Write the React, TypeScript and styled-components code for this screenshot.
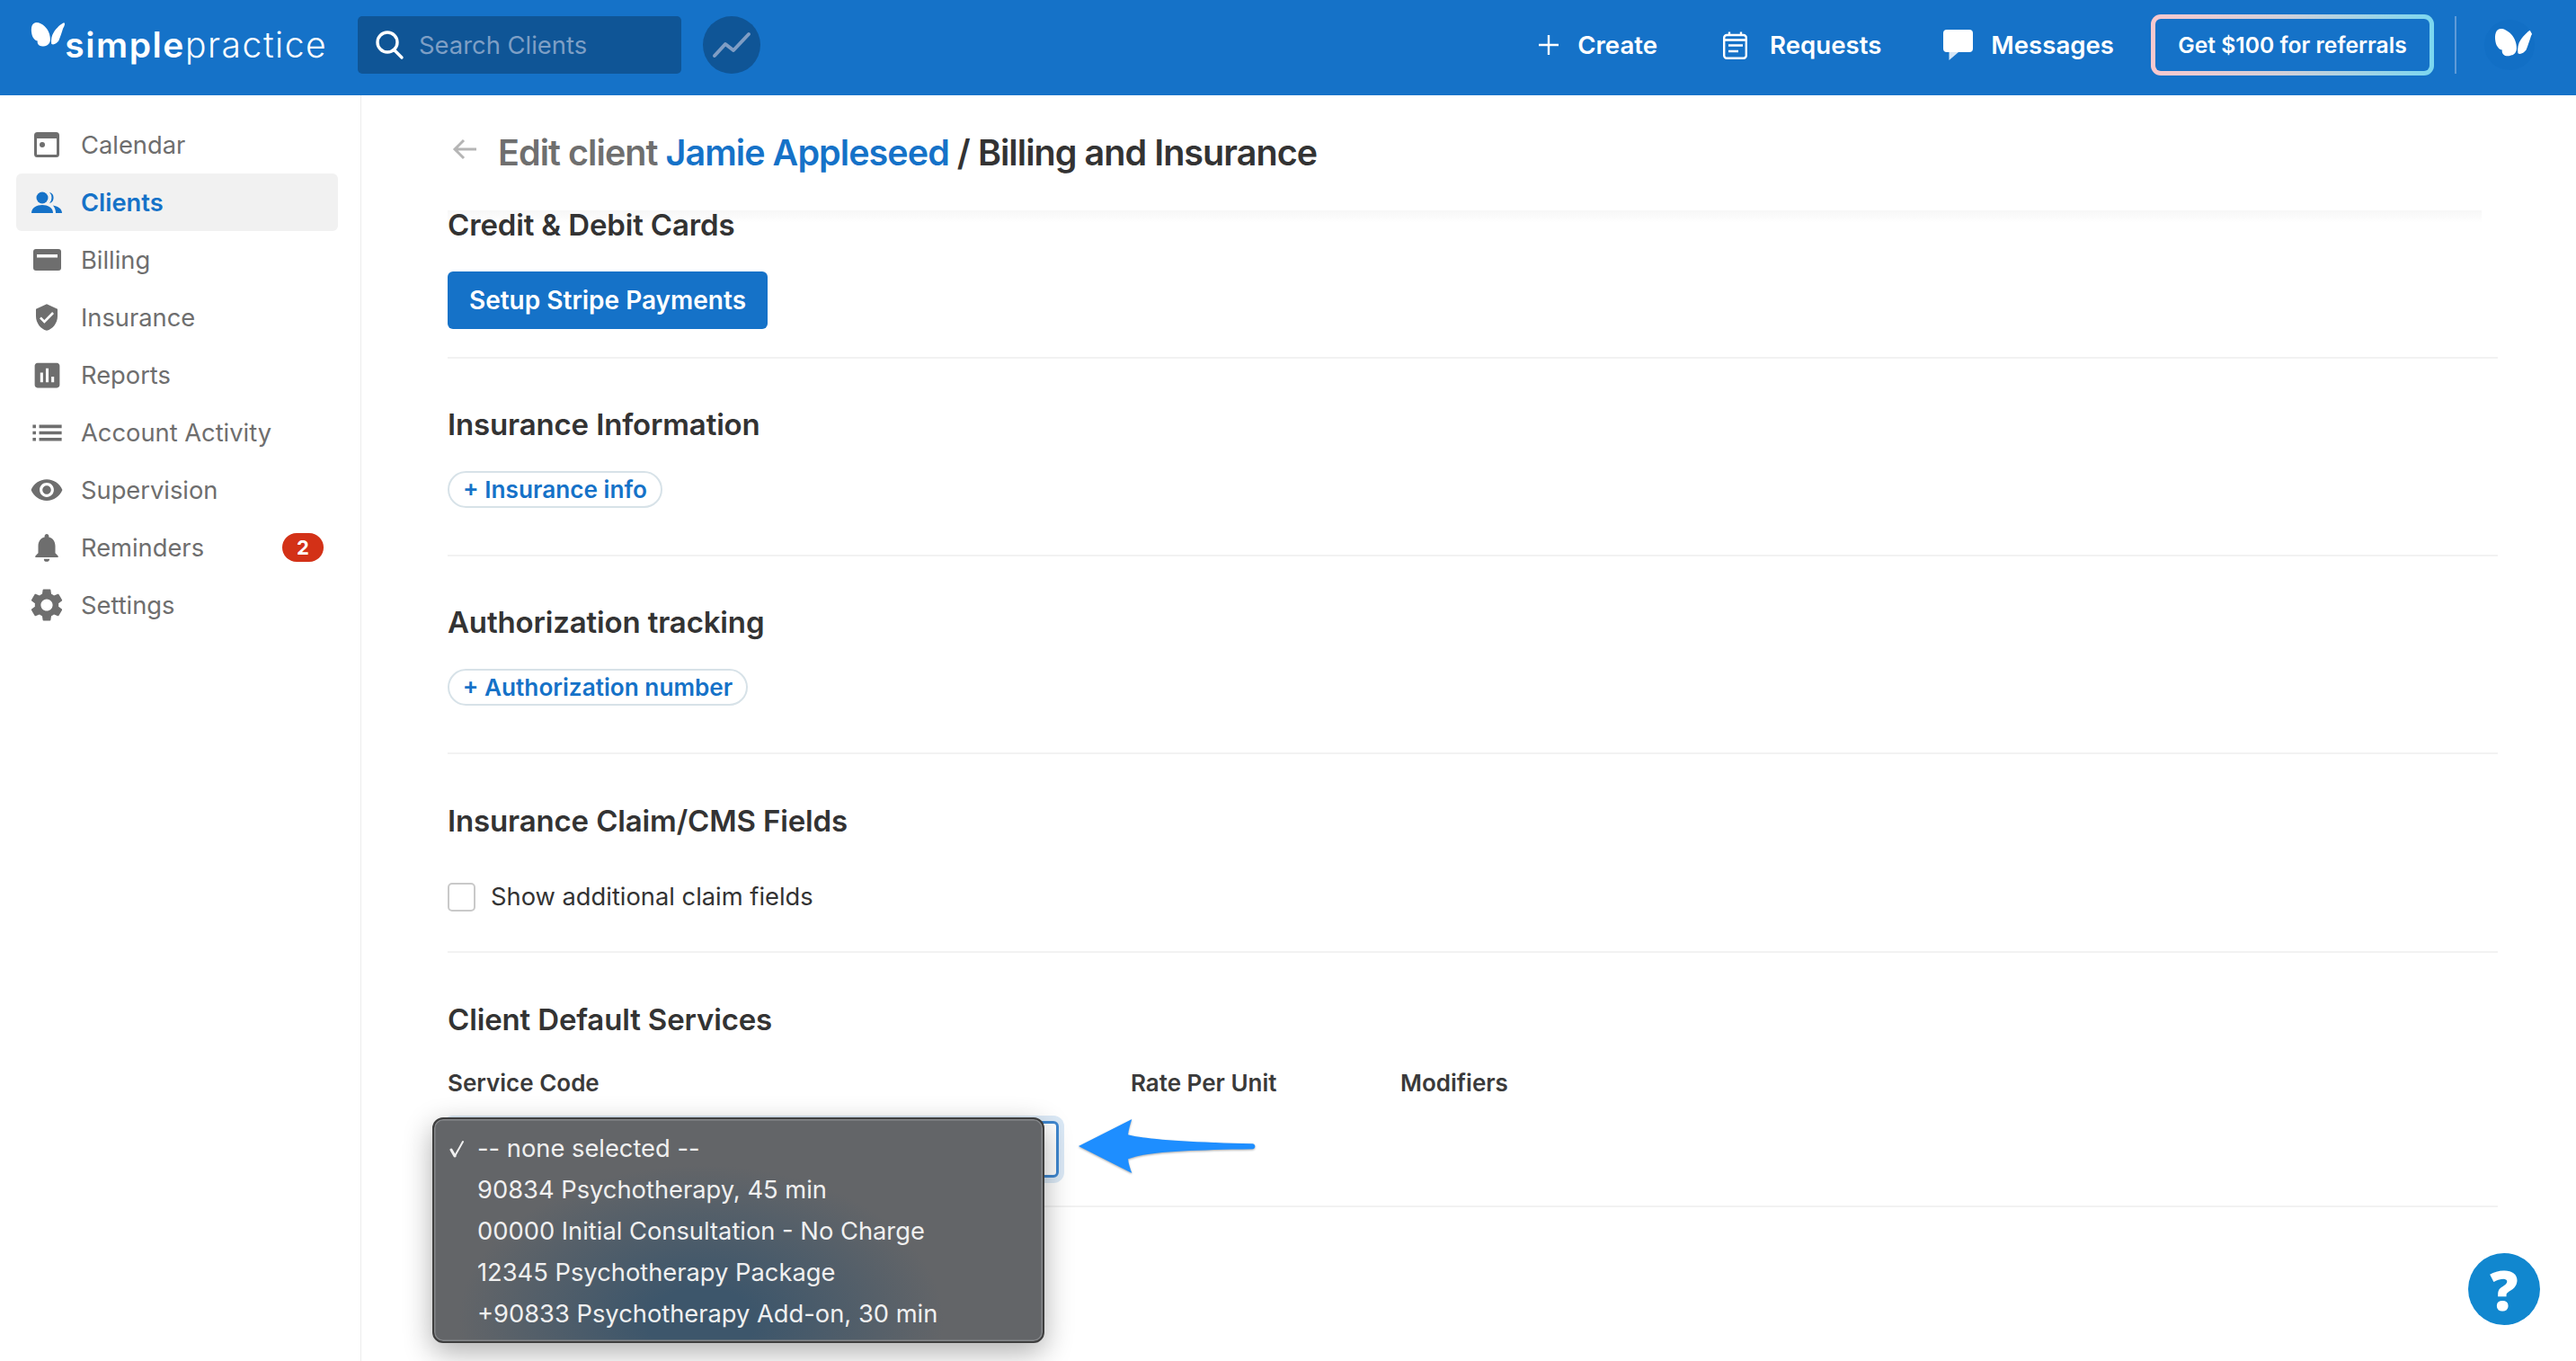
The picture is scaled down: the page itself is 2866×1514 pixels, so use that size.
import React from 'react';
import styled, { createGlobalStyle } from 'styled-components';
import {
  MdVerifiedUser,
  MdAssessment,
  MdList,
  MdVisibility,
  MdNotifications,
  MdSettings
} from 'react-icons/md';

const GlobalStyle = createGlobalStyle`
  html, body {
    margin: 0;
    padding: 0;
    background: #fff;
    font-family: Inter, "Liberation Sans", sans-serif;
  }
  * { box-sizing: border-box; }
`;

const Page = styled.div`
  position: relative;
  width: 2866px;
  height: 1514px;
  overflow: hidden;
  display: flex;
  flex-direction: column;
`;

const TopBar = styled.header`
  flex: 0 0 106px;
  display: flex;
  align-items: center;
  padding: 0 46px 6px 34px;
  background: #1572c8;
  color: #fff;
`;

const Logo = styled.div`
  display: flex;
  align-items: flex-start;
  width: 364px;
  font-size: 39px;
  line-height: 46px;
  letter-spacing: 1.55px;
  color: #fff;
  svg { flex: none; margin-top: -3px; margin-right: -1px; }
  b { font-weight: 600; }
  span { font-weight: 300; }
`;

const SearchBox = styled.div`
  width: 360px;
  height: 64px;
  display: flex;
  align-items: center;
  gap: 16px;
  padding-left: 18px;
  border-radius: 5px;
  background: #0f5596;
  color: #7e9fc5;
  font-size: 27.4px;
`;

const TrendButton = styled.div`
  width: 64px;
  height: 64px;
  margin-left: 24px;
  border-radius: 50%;
  background: #0f5596;
  display: flex;
  align-items: center;
  justify-content: center;
`;

const TopActions = styled.nav`
  margin-left: auto;
  display: flex;
  align-items: center;
`;

const TopLink = styled.div<{ $gap: number; $after: number }>`
  display: flex;
  align-items: center;
  gap: ${p => p.$gap}px;
  margin-right: ${p => p.$after}px;
  font-size: 27.6px;
  font-weight: 600;
`;

const ReferralButton = styled.div`
  width: 315px;
  height: 68px;
  display: flex;
  align-items: center;
  justify-content: center;
  border: 5px solid transparent;
  border-radius: 11px;
  background:
    linear-gradient(#1572c8, #1572c8) padding-box,
    linear-gradient(90deg, #f8c8ce, #d3cfd8 45%, #7bd7f0) border-box;
  font-size: 24.7px;
  font-weight: 600;
`;

const TopDivider = styled.div`
  width: 2px;
  height: 64px;
  margin: 0 31px 0 23px;
  background: #5f9bd8;
`;

const AccountAvatar = styled.div`
  width: 56px;
  height: 56px;
  padding: 9px 0 0 11px;
  border-radius: 50%;
  overflow: hidden;
  background: #126fc5;
  svg { display: block; }
`;

const Body = styled.div`
  flex: 1;
  display: flex;
  min-height: 0;
`;

const Sidebar = styled.aside`
  flex: 0 0 402px;
  padding: 23px 25px 0 18px;
  border-right: 1px solid #ececec;
`;

const NavRow = styled.div<{ $active?: boolean }>`
  height: 64px;
  display: flex;
  align-items: center;
  border-radius: 6px;
  background: ${p => (p.$active ? '#f1f1f1' : 'transparent')};
  color: ${p => (p.$active ? '#1572c8' : '#6e6e6e')};
  font-size: 27.3px;
  font-weight: ${p => (p.$active ? 600 : 400)};
`;

const NavIcon = styled.div`
  width: 68px;
  margin-right: 4px;
  display: flex;
  justify-content: center;
`;

const Badge = styled.div`
  margin-left: auto;
  margin-right: 16px;
  width: 46px;
  height: 32px;
  border-radius: 16px;
  background: #d33117;
  color: #fff;
  display: flex;
  align-items: center;
  justify-content: center;
  font-size: 22px;
  font-weight: 700;
`;

const Main = styled.main`
  position: relative;
  z-index: 0;
  flex: 1;
  min-width: 0;
  padding: 0 87px 0 96px;
`;

const TitleBar = styled.div`
  position: relative;
  height: 124px;
  display: flex;
  align-items: center;
  padding-top: 4px;

  &::after {
    content: '';
    position: absolute;
    z-index: -1;
    left: 0;
    right: 18px;
    top: 128px;
    height: 14px;
    background: linear-gradient(#f7f7f7, #fff);
  }
`;

const BackArrow = styled.div`
  width: 56px;
  display: flex;
  align-items: center;
  padding: 0 0 8px 5px;
`;

const Title = styled.h1`
  margin: 0;
  font-size: 39.5px;
  font-weight: 600;
  letter-spacing: -0.95px;
  color: #333;
`;

const TitleMuted = styled.span`
  color: #6f6f6f;
`;

const TitleLink = styled.span`
  color: #1572c8;
`;

const Section = styled.section<{ $top: number; $bottom: number }>`
  padding: ${p => p.$top}px 0 ${p => p.$bottom}px;
  border-bottom: 2px solid #f2f2f2;
`;

const Heading = styled.h2<{ $after: number }>`
  margin: 0 0 ${p => p.$after}px;
  font-size: 33px;
  line-height: 40px;
  font-weight: 600;
  letter-spacing: -0.15px;
  color: #333;
`;

const PrimaryButton = styled.button`
  display: block;
  width: 356px;
  height: 64px;
  padding: 0;
  border: 0;
  border-radius: 6px;
  background: #1572c8;
  color: #fff;
  font-family: inherit;
  font-size: 28px;
  font-weight: 600;
`;

const PillButton = styled.button<{ $width: number }>`
  display: block;
  width: ${p => p.$width}px;
  height: 41px;
  padding: 0;
  border: 2px solid #d7e2e8;
  border-radius: 21px;
  background: #fff;
  color: #1572c8;
  font-family: inherit;
  font-size: 26.2px;
  font-weight: 600;
`;

const CheckRow = styled.label`
  display: flex;
  align-items: center;
  gap: 17px;
  height: 33px;
  font-size: 27.3px;
  color: #333;
`;

const CheckBox = styled.span`
  width: 31px;
  height: 32px;
  border: 2px solid #c9c9c9;
  border-radius: 5px;
  background: #fff;
`;

const FieldLabels = styled.div`
  display: grid;
  grid-template-columns: 760px 300px auto;
  margin-bottom: 26px;
  font-size: 26px;
  line-height: 32px;
  font-weight: 600;
  color: #3a3a3a;
`;

const SelectBox = styled.div`
  width: 680px;
  height: 63px;
  border: 3px solid #3f87cf;
  border-radius: 6px;
  background: #fff;
  box-shadow: 0 0 0 6px #dbe9f6;
`;

const SelectMenu = styled.div`
  position: absolute;
  left: 481px;
  top: 1243px;
  width: 681px;
  height: 251px;
  padding: 10px 0 0 17px;
  border: 2px solid #3e3e3e;
  border-radius: 12px;
  background:
    radial-gradient(ellipse 270px 175px at 297px 226px, #3d566b 0%, #3d566b 22%, rgba(61, 86, 107, 0) 100%),
    #636568;
  box-shadow: inset 0 0 0 1.5px #85878a, 0 10px 32px rgba(0, 0, 0, 0.32);
  color: #f0f0f0;
  font-size: 27.3px;
`;

const MenuOption = styled.div`
  height: 45.8px;
  display: flex;
  align-items: center;
`;

const MenuCheck = styled.span`
  flex: none;
  width: 31px;
  display: flex;
  align-items: center;
`;

const AnnotationArrow = styled.svg`
  position: absolute;
  left: 1160px;
  top: 1230px;
  filter: drop-shadow(0 1px 1px rgba(0, 0, 0, 0.35));
`;

const HelpButton = styled.div`
  position: absolute;
  left: 2746px;
  top: 1394px;
  width: 80px;
  height: 80px;
  border-radius: 50%;
  background: #1187cf;
  color: #fff;
  display: flex;
  align-items: center;
  justify-content: center;
  font-family: "Open Sans", sans-serif;
  font-size: 62px;
  font-weight: 800;
`;

const Butterfly = ({ height }: { height: number }) => (
  <svg width={(height * 122) / 90} height={height} viewBox="40 48 122 90" fill="#fff">
    <path d="M45 62C50 50 62 48 75 55c20 10 33 30 33 55 0 12-8 22-23 23-13 2-23-5-21-18-9-2-17-10-20-25-2-10-2-20 1-28z" />
    <path d="M156 52c4 3 2 10-4 20-4 13-9 28-15 43-7 10-19 15-25 10-2-15 1-30 8-40 10-15 25-30 36-33z" />
  </svg>
);

const CalendarIcon = () => (
  <svg width="28" height="28" viewBox="0 0 28 28">
    <rect x="1.5" y="1.5" width="25" height="25" rx="2" fill="none" stroke="#6e6e6e" strokeWidth="3" />
    <rect x="1" y="1" width="26" height="6" fill="#6e6e6e" />
    <circle cx="9" cy="14" r="3" fill="#6e6e6e" />
  </svg>
);

const ClientsIcon = () => (
  <svg width="34" height="24" viewBox="0 0 34 24" fill="#1572c8">
    <circle cx="12" cy="7" r="6.5" />
    <path d="M20 .8a6.5 6.5 0 0 1 0 12.4 9 9 0 0 0 0-12.4z" />
    <path d="M0 24c0-6 6-9 12-9s12 3 12 9z" />
    <path d="M24 15.5c5 .8 10 3.5 10 8.5h-7c0-3-1-6-3-8.5z" />
  </svg>
);

const BillingIcon = () => (
  <svg width="31" height="24" viewBox="0 0 31 24">
    <path d="M3 0h25a3 3 0 0 1 3 3v18a3 3 0 0 1-3 3H3a3 3 0 0 1-3-3V3a3 3 0 0 1 3-3z" fill="#6e6e6e" />
    <rect x="4" y="6" width="23" height="3.5" fill="#fff" />
  </svg>
);

const navItems = [
  { label: 'Calendar', icon: <CalendarIcon /> },
  { label: 'Clients', icon: <ClientsIcon />, active: true },
  { label: 'Billing', icon: <BillingIcon /> },
  { label: 'Insurance', icon: <MdVerifiedUser size={32} /> },
  { label: 'Reports', icon: <MdAssessment size={37} /> },
  { label: 'Account Activity', icon: <MdList size={43} /> },
  { label: 'Supervision', icon: <MdVisibility size={38} /> },
  { label: 'Reminders', icon: <MdNotifications size={38} />, badge: 2 },
  { label: 'Settings', icon: <MdSettings size={44} /> }
];

const menuOptions = [
  '90834 Psychotherapy, 45 min',
  '00000 Initial Consultation - No Charge',
  '12345 Psychotherapy Package',
  '+90833 Psychotherapy Add-on, 30 min'
];

const App = () => (
  <Page>
    <GlobalStyle />
    <TopBar>
      <Logo>
        <Butterfly height={29} />
        <div><b>simple</b><span>practice</span></div>
      </Logo>
      <SearchBox>
        <svg width="34" height="34" viewBox="0 0 34 34" fill="none" stroke="#fff" strokeWidth="3.4" strokeLinecap="round">
          <circle cx="15" cy="14" r="11" />
          <path d="M23 23l8 8" />
        </svg>
        Search Clients
      </SearchBox>
      <TrendButton>
        <svg width="44" height="30" viewBox="0 0 44 30" fill="none" stroke="#7f9dc4" strokeWidth="4" strokeLinejoin="round" strokeLinecap="round">
          <path d="M3 27l12-13 9 7L41 3" />
        </svg>
      </TrendButton>
      <TopActions>
        <TopLink $gap={21} $after={73}>
          <svg width="22" height="22" viewBox="0 0 22 22" stroke="#fff" strokeWidth="2.4">
            <path d="M11 0v22M0 11h22" />
          </svg>
          Create
        </TopLink>
        <TopLink $gap={25} $after={69}>
          <svg width="27" height="31" viewBox="0 0 27 31" fill="none" stroke="#fff" strokeWidth="2.4">
            <rect x="1.2" y="4" width="24.6" height="25.8" rx="3" />
            <path d="M1 9.5h25" strokeWidth="2.6" />
            <path d="M7 .5v4M20 .5v4M6 15.5h16M6 22h11" />
          </svg>
          Requests
        </TopLink>
        <TopLink $gap={20} $after={41}>
          <svg width="33" height="34" viewBox="0 0 33 34" fill="#fff">
            <path d="M6.5 25v9L17 25z" fill="#d6e6f6" />
            <rect width="33" height="25" rx="4" />
          </svg>
          Messages
        </TopLink>
        <ReferralButton>Get $100 for referrals</ReferralButton>
        <TopDivider />
        <AccountAvatar>
          <Butterfly height={33} />
        </AccountAvatar>
      </TopActions>
    </TopBar>
    <Body>
      <Sidebar>
        {navItems.map(item => (
          <NavRow key={item.label} $active={item.active}>
            <NavIcon>{item.icon}</NavIcon>
            {item.label}
            {item.badge ? <Badge>{item.badge}</Badge> : null}
          </NavRow>
        ))}
      </Sidebar>
      <Main>
        <TitleBar>
          <BackArrow>
            <svg width="28" height="24" viewBox="0 0 28 24" fill="none" stroke="#b5b5b5" strokeWidth="3">
              <path d="M27 12H3M13 2L3 12l10 10" />
            </svg>
          </BackArrow>
          <Title>
            <TitleMuted>Edit client </TitleMuted>
            <TitleLink>Jamie Appleseed</TitleLink> / Billing and Insurance
          </Title>
        </TitleBar>
        <Section $top={0} $bottom={31}>
          <Heading $after={32}>Credit &amp; Debit Cards</Heading>
          <PrimaryButton>Setup Stripe Payments</PrimaryButton>
        </Section>
        <Section $top={53} $bottom={52}>
          <Heading $after={32}>Insurance Information</Heading>
          <PillButton $width={239}>+ Insurance info</PillButton>
        </Section>
        <Section $top={53} $bottom={52}>
          <Heading $after={32}>Authorization tracking</Heading>
          <PillButton $width={334}>+ Authorization number</PillButton>
        </Section>
        <Section $top={54} $bottom={44}>
          <Heading $after={48}>Insurance Claim/CMS Fields</Heading>
          <CheckRow>
            <CheckBox />
            Show additional claim fields
          </CheckRow>
        </Section>
        <Section $top={54} $bottom={31}>
          <Heading $after={35}>Client Default Services</Heading>
          <FieldLabels>
            <span>Service Code</span>
            <span>Rate Per Unit</span>
            <span>Modifiers</span>
          </FieldLabels>
          <SelectBox />
        </Section>
      </Main>
    </Body>
    <SelectMenu>
      <MenuOption>
        <MenuCheck>
          <svg width="18" height="20" viewBox="0 0 18 20" fill="none" stroke="#f0f0f0" strokeLinecap="round" strokeLinejoin="round">
            <path d="M2 11l4 7" strokeWidth="3" />
            <path d="M6 18L15 2" strokeWidth="2" />
          </svg>
        </MenuCheck>
        -- none selected --
      </MenuOption>
      {menuOptions.map(option => (
        <MenuOption key={option}><MenuCheck />{option}</MenuOption>
      ))}
    </SelectMenu>
    <AnnotationArrow width="250" height="90" viewBox="0 0 750 270">
      <path
        d="M120 135L298 45c-6 17-11 35-13 52 55 15 195 25 415 30 12 1 12 17 0 18-220 3-360 10-415 33 2 17 7 32 13 47z"
        fill="#1e8eff"
      />
    </AnnotationArrow>
    <HelpButton>?</HelpButton>
  </Page>
);

export default App;
